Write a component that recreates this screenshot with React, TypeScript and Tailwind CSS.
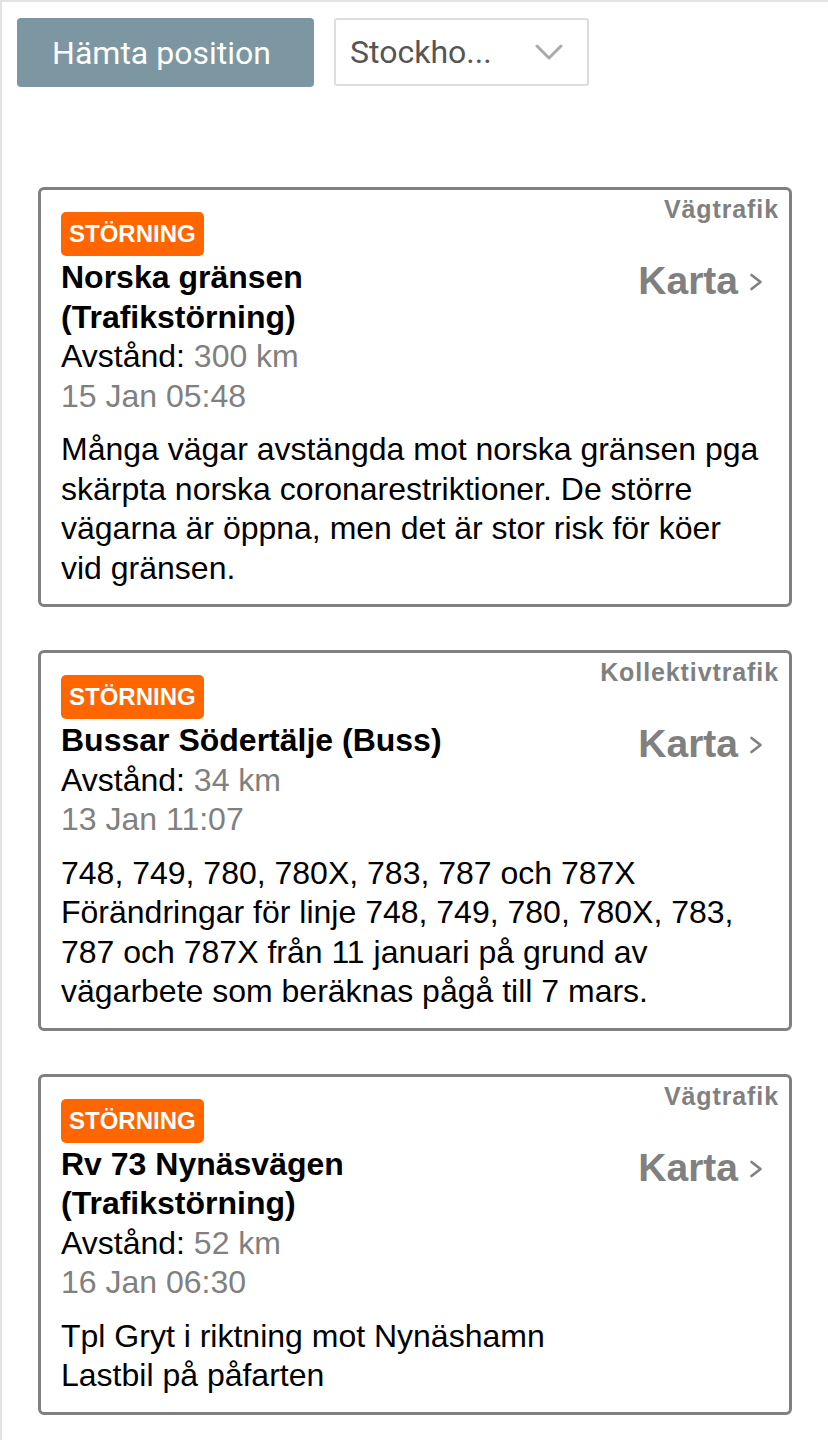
import { useState } from 'react'

type Item = {
  id: number
  category: string
  title: string
  distance: string
  date: string
  description: string
}

const items: Item[] = [
  {
    id: 1,
    category: 'Vägtrafik',
    title: 'Norska gränsen (Trafikstörning)',
    distance: '300 km',
    date: '15 Jan 05:48',
    description:
      'Många vägar avstängda mot norska gränsen pga skärpta norska coronarestriktioner. De större vägarna är öppna, men det är stor risk för köer vid gränsen.',
  },
  {
    id: 2,
    category: 'Kollektivtrafik',
    title: 'Bussar Södertälje (Buss)',
    distance: '34 km',
    date: '13 Jan 11:07',
    description:
      '748, 749, 780, 780X, 783, 787 och 787X\nFörändringar för linje 748, 749, 780, 780X, 783, 787 och 787X från 11 januari på grund av vägarbete som beräknas pågå till 7 mars.',
  },
  {
    id: 3,
    category: 'Vägtrafik',
    title: 'Rv 73 Nynäsvägen (Trafikstörning)',
    distance: '52 km',
    date: '16 Jan 06:30',
    description: 'Tpl Gryt i riktning mot Nynäshamn\nLastbil på påfarten',
  },
]

const Card = ({ item }: { item: Item }) => {
  return (
    <div className="relative rounded-[6px] border-[3px] border-[#808080] bg-white px-[20px] pt-[22px] pb-[16px] font-['Liberation_Sans',Arial,sans-serif] text-black">
      <div className="absolute top-[7px] right-[10px] text-[25px] leading-[24px] font-bold tracking-[0.9px] text-[#808080]">
        {item.category}
      </div>
      <div className="inline-flex h-[44px] items-center rounded-[5px] bg-[#ff6600] px-[8px] text-[24px] font-bold text-white">
        STÖRNING
      </div>
      <div className="mt-[2px] flex items-start">
        <div className="min-w-0 flex-1 text-[32px] leading-[39.5px]">
          <h2 className="font-bold">{item.title}</h2>
          <p>
            Avstånd: <span className="text-[#808080]">{item.distance}</span>
          </p>
          <p className="text-[#808080]">{item.date}</p>
        </div>
        <a className="mt-[3px] flex w-[230px] cursor-pointer items-center justify-end gap-[11px] pr-[6px] text-[39px] leading-[40px] font-bold text-[#808080]">
          Karta
          <svg
            xmlns="http://www.w3.org/2000/svg"
            className="mt-[2px] h-[18px] w-[14px] flex-none"
            viewBox="0 0 14 18"
          >
            <path
              d="M2.5 2L11.5 9l-9 7"
              fill="none"
              stroke="currentColor"
              strokeWidth="2.6"
              strokeLinecap="round"
              strokeLinejoin="round"
            />
          </svg>
        </a>
      </div>
      <p className="mt-[14px] text-[32px] leading-[39.5px] whitespace-pre-line">
        {item.description}
      </p>
    </div>
  )
}

const App = () => {
  const [city] = useState('Stockho...')

  return (
    <div className="min-h-[1440px] border-t-2 border-l-2 border-[#e3e3e3] bg-white">
      <div className="flex gap-[20px] pt-[16px] pl-[15px] font-['Roboto',sans-serif]">
        <button className="h-[69px] w-[297px] rounded-[4px] bg-[#7c96a2] pr-[8px] text-[32px] text-white">
          Hämta position
        </button>
        <div className="flex h-[68px] w-[255px] items-center justify-between rounded-[3px] border-2 border-[#dddddd] pr-[24px] pl-[14px] text-[32px] text-[#555555]">
          <span>{city}</span>
          <svg
            xmlns="http://www.w3.org/2000/svg"
            className="h-[16px] w-[28px] flex-none text-[#aaaaaa]"
            viewBox="0 0 28 16"
          >
            <path
              d="M2 2l12 12L26 2"
              fill="none"
              stroke="currentColor"
              strokeWidth="3"
              strokeLinecap="round"
              strokeLinejoin="round"
            />
          </svg>
        </div>
      </div>
      <div className="mt-[100px] flex flex-col gap-[43px] pr-[36px] pl-[36px]">
        {items.map((item) => (
          <Card key={item.id} item={item} />
        ))}
      </div>
    </div>
  )
}

export default App
